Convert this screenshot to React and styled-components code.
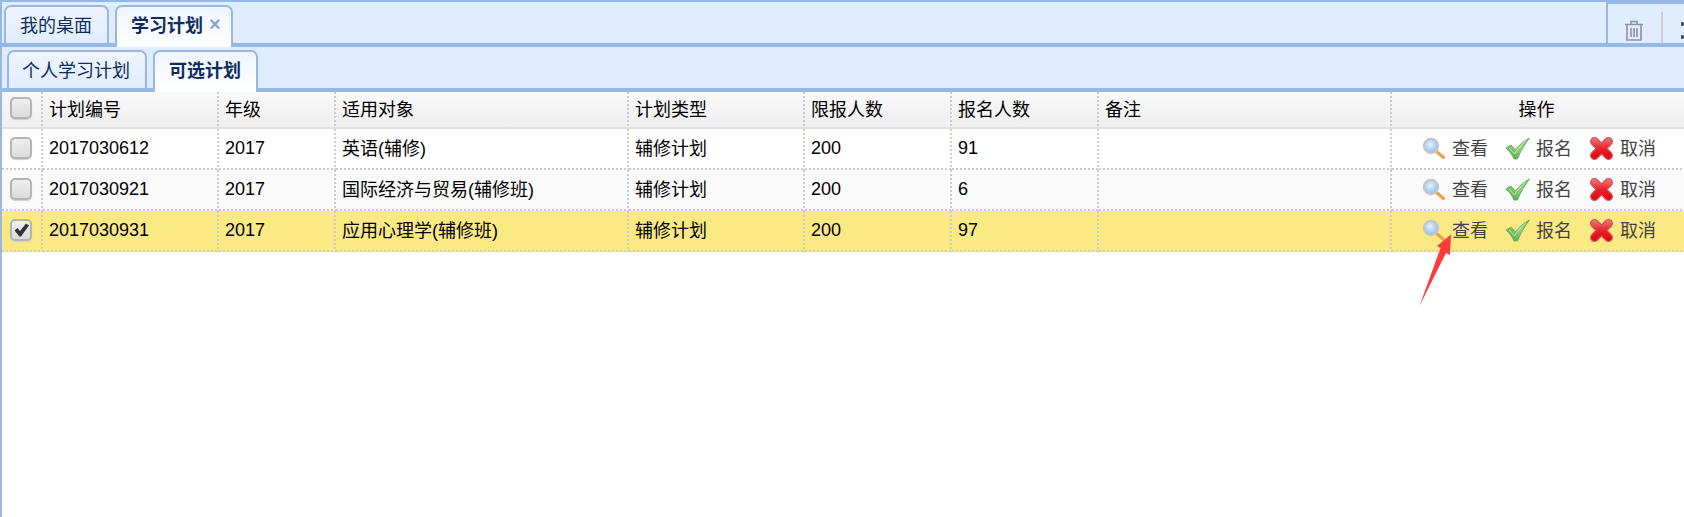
import React from 'react';
import styled, { createGlobalStyle } from 'styled-components';

const Global = createGlobalStyle`
  html, body { margin: 0; padding: 0; background: #fff; }
  body { font-family: "Liberation Sans", "Noto Sans CJK SC", sans-serif; font-size: 18px; color: #000; }
`;
const Page = styled.div`
  position: relative; width: 1684px; height: 517px; overflow: hidden; background: #fff;
  border-left: 2px solid #95b8e7; box-sizing: border-box;
`;
const TabBar = styled.div`
  display: flex; align-items: flex-end; height: ${p => p.$h}px; box-sizing: border-box;
  margin-left: -2px; background: #e0ecff;
  border-top: ${p => p.$top ? '2px solid #95b8e7' : 'none'};
  border-bottom: 4px solid #95b8e7;
  padding-left: ${p => p.$pad}px; gap: 6px;
`;
const Tab = styled.div`
  display: flex; align-items: center; box-sizing: border-box;
  padding: 0 ${p => p.$pr}px 2px ${p => p.$pl}px; gap: 6px;
  border: 2px solid #95b8e7; border-bottom: none; border-radius: 7px 7px 0 0;
  color: #0e2d5f;
  font-weight: ${p => p.$active ? 700 : 400};
  background: ${p => p.$active ? 'linear-gradient(#eff5ff, #fff)' : 'linear-gradient(#eff5ff, #e0ecff)'};
  margin-bottom: ${p => p.$active ? '-4px' : '0'};
  height: ${p => p.$active ? 42 : 38}px;
  padding-bottom: ${p => p.$active ? 6 : 2}px;
  position: relative;
`;
const Close = styled.span`
  color: #8ca3c8; font-size: 20px; font-weight: 700; line-height: 1;
`;
const Tools = styled.div`
  margin-left: auto; align-self: stretch; display: flex; align-items: stretch;
  width: 78px; box-sizing: border-box; border-left: 2px solid #95b8e7; border-top: 2px solid #95b8e7;
  padding-left: 16px; gap: 17px; overflow: hidden; flex-shrink: 0;
`;
const ToolSep = styled.div`
  width: 2px; height: 32px; background: #ccc; margin-top: 8px; flex-shrink: 0;
`;
const Table = styled.table`
  border-collapse: separate; border-spacing: 0; table-layout: fixed; width: 1682px;
`;
const dotsV = 'repeating-linear-gradient(to bottom, #ccc 0 2px, transparent 2px 4px)';
const dotsH = 'repeating-linear-gradient(to right, #ccc 0 2px, transparent 2px 4px)';
const Th = styled.th`
  height: 37px; padding: 0 7px 3px 6px; box-sizing: border-box; font-weight: 400; text-align: ${p => p.$center ? 'center' : 'left'};
  background-color: #f4f4f4;
  background-image: ${dotsV}, linear-gradient(#f9f9f9, #efefef);
  background-size: 2px 100%, 100% 100%;
  background-position: right top, left top;
  background-repeat: no-repeat;
  border-bottom: 2px solid #e0e0e0;
  &:last-child { background-image: linear-gradient(#f9f9f9, #efefef); background-size: 100% 100%; padding-right: 9px; }
`;
const Td = styled.td`
  height: 41px; padding: 0 7px ${p => p.$cjk ? 5 : 2}px 6px; box-sizing: border-box;
  background-color: ${p => p.$bg};
  background-image: ${dotsV}, ${dotsH};
  background-size: 2px 100%, 100% 2px;
  background-position: right top, left bottom;
  background-repeat: no-repeat;
  &:last-child { background-image: ${dotsH}; background-size: 100% 2px; background-position: left bottom; }
`;
const CheckCell = styled.div`
  display: flex; justify-content: center; margin: 0 -7px 0 -6px; padding: 0 3px 1px 0;
`;
const Check = styled.span`
  display: flex; align-items: center; justify-content: center;
  width: 22px; height: 22px; box-sizing: border-box; border-radius: 5px;
  border: 2px solid #b4b4b4; box-shadow: 0 1px 1px #ccc;
  background: linear-gradient(#eeeeee, #dcdcdc);
`;
const Actions = styled.div`
  display: flex; align-items: center; justify-content: flex-end; padding-right: 21px; color: #444; gap: 17px;
`;
const Action = styled.span`
  display: flex; align-items: center; gap: 6px;
`;
const ActionLabel = styled.span`
  padding-bottom: 3px;
`;
const Arrow = styled.svg`
  position: absolute; left: 1416px; top: 234px;
`;

const Mag = () => (
  <svg width="24" height="24" viewBox="0 0 24 24">
    <defs><radialGradient id="lens" cx=".45" cy=".4"><stop offset="0" stopColor="#e6f2fe"/><stop offset="1" stopColor="#9cc6f2"/></radialGradient></defs>
    <line x1="14" y1="14" x2="21.5" y2="20.5" stroke="#e6a546" strokeWidth="3.2" strokeLinecap="round"/>
    <circle cx="9" cy="9" r="7.2" fill="url(#lens)" stroke="#c3c6ca" strokeWidth="2"/>
  </svg>
);
const Tick = () => (
  <svg width="25" height="24" viewBox="0 0 25 24">
    <defs><linearGradient id="tick" x1="0" y1="1" x2="1" y2="0"><stop offset="0" stopColor="#3f9a3f"/><stop offset=".6" stopColor="#9bd982"/><stop offset="1" stopColor="#58ad50"/></linearGradient></defs>
    <path d="M1 11 L6 8 L10.5 13 C14 8 19 4 24.5 1 C20 7 15.5 14 12.5 22 L9 22 C7 17 4 14 1 11 Z" fill="url(#tick)" stroke="#5aa85a" strokeWidth=".8" strokeLinejoin="round"/>
    <path d="M4 11 L9.5 17 C13 11 17 7 21 4" fill="none" stroke="#d8f2cc" strokeWidth="1" opacity=".8"/>
  </svg>
);
const Cross = () => (
  <svg width="25" height="25" viewBox="0 0 25 25">
    <defs><linearGradient id="crossFill" gradientUnits="userSpaceOnUse" x1="0" y1="0" x2="0" y2="25"><stop offset="0" stopColor="#f08a8a"/><stop offset=".5" stopColor="#ec2028"/><stop offset="1" stopColor="#d90008"/></linearGradient></defs>
    <path d="M5.5 5.5 L19.5 19.5 M19.5 5.5 L5.5 19.5" fill="none" stroke="#d2555c" strokeWidth="9" strokeLinecap="round"/>
    <path d="M5.5 5.5 L19.5 19.5 M19.5 5.5 L5.5 19.5" fill="none" stroke="url(#crossFill)" strokeWidth="6.5" strokeLinecap="round"/>
  </svg>
);
const CheckMark = () => (
  <svg width="15" height="14" viewBox="0 0 15 14">
    <path d="M0.5 7.5 L3.5 5 L6 8 L12 0.5 L15 2.5 L7 13.5 L5.5 13.5 Z" fill="#333"/>
  </svg>
);

const widths = [41, 176, 117, 293, 176, 147, 147, 293, 292];
const heads = ['计划编号', '年级', '适用对象', '计划类型', '限报人数', '报名人数', '备注'];
const rows = [
  { id: '2017030612', who: '英语(辅修)', n: '91', bg: '#ffffff' },
  { id: '2017030921', who: '国际经济与贸易(辅修班)', n: '6', bg: '#fafafa' },
  { id: '2017030931', who: '应用心理学(辅修班)', n: '97', bg: '#fbe983', on: true },
];

export default function App() {
  return (
    <Page>
      <Global />
      <TabBar $h={47} $top $pad={4}>
        <Tab $pl={14} $pr={15}>我的桌面</Tab>
        <Tab $active $pl={14} $pr={10}>学习计划<Close>×</Close></Tab>
        <Tools>
          <svg width="20" height="41" viewBox="0 0 20 41" style={{ flexShrink: 0 }}>
            <path d="M1 20.5 H19 M7 20.5 V17.5 H13 V20.5 M3 20.5 V36 H17 V20.5 M7 24 V33 M10 24 V33 M13 24 V33" fill="none" stroke="#8c93a3" strokeWidth="1.6"/>
          </svg>
          <ToolSep />
          <svg width="10" height="41" viewBox="0 0 10 41" style={{ flexShrink: 0 }}>
            <path d="M1 20 H8 M1 33 H8" fill="none" stroke="#3d4a5c" strokeWidth="3.5"/>
          </svg>
        </Tools>
      </TabBar>
      <TabBar $h={45} $pad={7}>
        <Tab $pl={13} $pr={15}>个人学习计划</Tab>
        <Tab $active $pl={14} $pr={15}>可选计划</Tab>
      </TabBar>
      <Table>
        <colgroup>{widths.map((w, i) => <col key={i} style={{ width: w }} />)}</colgroup>
        <thead>
          <tr>
            <Th><CheckCell><Check /></CheckCell></Th>
            {heads.map(h => <Th key={h}>{h}</Th>)}
            <Th $center>操作</Th>
          </tr>
        </thead>
        <tbody>
          {rows.map(r => (
            <tr key={r.id}>
              <Td $bg={r.bg}><CheckCell><Check>{r.on && <CheckMark />}</Check></CheckCell></Td>
              <Td $bg={r.bg}>{r.id}</Td>
              <Td $bg={r.bg}>2017</Td>
              <Td $bg={r.bg} $cjk>{r.who}</Td>
              <Td $bg={r.bg} $cjk>辅修计划</Td>
              <Td $bg={r.bg}>200</Td>
              <Td $bg={r.bg}>{r.n}</Td>
              <Td $bg={r.bg}></Td>
              <Td $bg={r.bg}>
                <Actions>
                  <Action><Mag /><ActionLabel>查看</ActionLabel></Action>
                  <Action><Tick /><ActionLabel>报名</ActionLabel></Action>
                  <Action><Cross /><ActionLabel>取消</ActionLabel></Action>
                </Actions>
              </Td>
            </tr>
          ))}
        </tbody>
      </Table>
      <Arrow width="36" height="74" viewBox="0 0 36 74">
        <path d="M33 0.5 L19 12 L22.5 14 L1.5 72 L28 19 L32 21 Z" fill="#ff3b3b"/>
      </Arrow>
    </Page>
  );
}
